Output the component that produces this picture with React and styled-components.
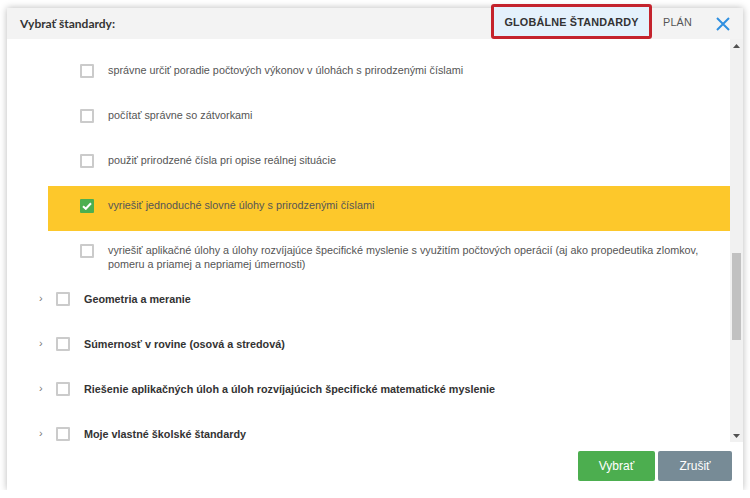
import React from "react";
import styled, { createGlobalStyle } from "styled-components";

const Global = createGlobalStyle`
  html, body { margin: 0; padding: 0; background: #fff; }
  body { font-family: "Liberation Sans", Arial, sans-serif; }
  * { box-sizing: border-box; }
`;

const Modal = styled.div`
  margin: 8px 7px 0 7px;
  width: 736px;
  height: 482px;
  background: #fff;
  box-shadow: 0 0 7px rgba(0, 0, 0, 0.28);
  display: flex;
  flex-direction: column;
`;

const Header = styled.div`
  height: 31px;
  background: #f3f3f3;
  display: flex;
  align-items: center;
  padding: 0 12px 0 13px;
`;

const Title = styled.div`
  font-family: Lato, "Liberation Sans", sans-serif;
  font-weight: 700;
  font-size: 12px;
  color: #333;
  flex: 1;
`;

const Tab = styled.div`
  font-size: 10.8px;
  white-space: nowrap;
  color: ${(p) => (p.$active ? "#333" : "#555")};
  font-weight: ${(p) => (p.$active ? 700 : 400)};
  letter-spacing: 0.2px;
  padding: 0 11px;
  height: 35px;
  margin-top: -4px;
  display: flex;
  align-items: center;
  ${(p) =>
    p.$active &&
    `
    background: #e4f1fc;
    border: 3px solid #c4232d;
    border-radius: 3px;
    padding: 0;
    width: 161px;
    justify-content: center;
  `}
`;

const Close = styled.button`
  border: 0;
  background: none;
  padding: 0;
  margin-left: 12px;
  width: 16px;
  height: 16px;
  display: flex;
  cursor: pointer;
`;

const Body = styled.div`
  flex: 1;
  display: flex;
  min-height: 0;
`;

const List = styled.div`
  flex: 1;
  overflow: hidden;
  padding-top: 12px;
`;

const SubRow = styled.div`
  height: 45px;
  display: flex;
  align-items: flex-start;
  padding: 13px 10px 0 32px;
  margin-left: 41px;
  background: ${(p) => (p.$selected ? "#fdc82b" : "transparent")};
`;

const TopRow = styled.div`
  height: 45px;
  display: flex;
  align-items: center;
  padding-left: 32px;
`;

const Chevron = styled.span`
  width: 17px;
  font-size: 11px;
  color: #777;
  line-height: 1;
`;

const Box = styled.span`
  flex: none;
  width: 14px;
  height: 14px;
  border: 2px solid ${(p) => (p.$checked ? "#4caf50" : "#cbcbcb")};
  background: ${(p) => (p.$checked ? "#4caf50" : "#fff")};
  border-radius: 1px;
  margin-right: 14px;
  display: flex;
  align-items: center;
  justify-content: center;
`;

const SubText = styled.div`
  font-size: 10.8px;
  line-height: 14px;
  color: #555;
  margin-top: -1px;
`;

const TopText = styled.div`
  font-size: 10.8px;
  font-weight: 700;
  color: #333;
`;

const Scrollbar = styled.div`
  width: 13px;
  background: #f1f1f1;
  display: flex;
  flex-direction: column;
  align-items: center;
`;

const Arrow = styled.div`
  height: 13px;
  display: flex;
  align-items: center;
  justify-content: center;
`;

const Track = styled.div`
  flex: 1;
  width: 100%;
  padding: 0 2px;
`;

const Thumb = styled.div`
  width: 100%;
  background: #c1c1c1;
`;

const Footer = styled.div`
  height: 48px;
  display: flex;
  justify-content: flex-end;
  align-items: center;
  gap: 3px;
  padding: 0 11px 0 0;
`;

const Btn = styled.button`
  border: 0;
  border-radius: 2px;
  height: 30px;
  width: ${(p) => p.$w}px;
  background: ${(p) => p.$bg};
  color: #fff;
  font-family: "Liberation Sans", Arial, sans-serif;
  font-size: 12px;
  cursor: pointer;
`;

const subItems = [
  "správne určiť poradie počtových výkonov v úlohách s prirodzenými číslami",
  "počítať správne so zátvorkami",
  "použiť prirodzené čísla pri opise reálnej situácie",
  "vyriešiť jednoduché slovné úlohy s prirodzenými číslami",
  "vyriešiť aplikačné úlohy a úlohy rozvíjajúce špecifické myslenie s využitím počtových operácií (aj ako propedeutika zlomkov, pomeru a priamej a nepriamej úmernosti)",
];

const topItems = [
  "Geometria a meranie",
  "Súmernosť v rovine (osová a stredová)",
  "Riešenie aplikačných úloh a úloh rozvíjajúcich špecifické matematické myslenie",
  "Moje vlastné školské štandardy",
];

const Check = () => (
  <svg width="10" height="8" viewBox="0 0 10 8">
    <path d="M1 4.2 L3.8 6.8 L9 1.2" stroke="#fff" strokeWidth="2" fill="none" />
  </svg>
);

export default function App() {
  return (
    <>
      <Global />
      <Modal>
        <Header>
          <Title>Vybrať štandardy:</Title>
          <Tab $active>GLOBÁLNE ŠTANDARDY</Tab>
          <Tab>PLÁN</Tab>
          <Close aria-label="close">
            <svg width="16" height="16" viewBox="0 0 16 16">
              <path d="M2 2 L14 14 M14 2 L2 14" stroke="#2f8fe0" strokeWidth="2" />
            </svg>
          </Close>
        </Header>
        <Body>
          <List>
            {subItems.map((t, i) => (
              <SubRow key={i} $selected={i === 3}>
                <Box $checked={i === 3}>{i === 3 && <Check />}</Box>
                <SubText>{t}</SubText>
              </SubRow>
            ))}
            {topItems.map((t, i) => (
              <TopRow key={i}>
                <Chevron>›</Chevron>
                <Box />
                <TopText>{t}</TopText>
              </TopRow>
            ))}
          </List>
          <Scrollbar>
            <Arrow>
              <svg width="7" height="4" viewBox="0 0 7 4">
                <path d="M0 4 L3.5 0 L7 4 Z" fill="#505050" />
              </svg>
            </Arrow>
            <Track>
              <Thumb style={{ marginTop: 201, height: 87 }} />
            </Track>
            <Arrow>
              <svg width="7" height="4" viewBox="0 0 7 4">
                <path d="M0 0 L3.5 4 L7 0 Z" fill="#505050" />
              </svg>
            </Arrow>
          </Scrollbar>
        </Body>
        <Footer>
          <Btn $w={77} $bg="#4cae4f">Vybrať</Btn>
          <Btn $w={74} $bg="#778b96">Zrušiť</Btn>
        </Footer>
      </Modal>
    </>
  );
}
